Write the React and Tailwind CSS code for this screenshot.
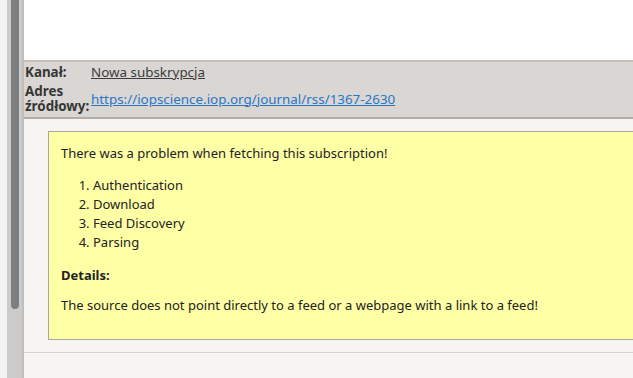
export default function App() {
  const font = { fontFamily: '"Noto Sans", "Open Sans", sans-serif' };
  return (
    <div className="flex h-[378px] w-[633px] overflow-hidden bg-[#f6f5f4] text-[13px] text-[#2e3436]" style={font}>
      <div className="w-[7px] shrink-0 bg-[#f3f3f3]" />
      <div className="relative w-[15px] shrink-0 bg-[#cbcbcb]">
        <div className="absolute left-[4px] top-0 h-[309px] w-[8px] rounded-b-[4px] bg-[#7b7f81]" />
      </div>
      <div className="flex min-w-0 flex-1 flex-col border-l-2 border-[#c3beba]">
        <div className="h-[60px] shrink-0 bg-white" />
        <div className="h-[59px] shrink-0 border-y-2 border-t-[#c5beb9] border-b-[#b3aca7] bg-[#dad6d3] pl-[1px] text-[13.4px]">
          <table className="border-collapse leading-[15px]">
            <tbody>
              <tr>
                <td className="h-[22px] w-[66px] pb-[1px] align-middle font-bold text-[#363636]">Kanał:</td>
                <td className="pb-[1px] align-middle">
                  <span className="text-[#3b3b3b] underline">Nowa subskrypcja</span>
                </td>
              </tr>
              <tr>
                <td className="align-top font-bold text-[#363636]">
                  <div>Adres</div>
                  <div>źródłowy:</div>
                </td>
                <td className="align-middle">
                  <span className="text-[#2a76c6] underline">https://iopscience.iop.org/journal/rss/1367-2630</span>
                </td>
              </tr>
            </tbody>
          </table>
        </div>
        <div className="flex-1 bg-[#f6f5f4] pt-[12px]">
          <div className="ml-[24px] h-[209px] border border-r-0 border-[#aaa89e] bg-[#ffffa6] px-[12px] pt-[12px] leading-[19px] text-[#222]">
            <p>There was a problem when fetching this subscription!</p>
            <ol className="mt-[13px] list-decimal pl-[32px]">
              <li>Authentication</li>
              <li>Download</li>
              <li>Feed Discovery</li>
              <li>Parsing</li>
            </ol>
            <p className="mt-[14px] font-bold">Details:</p>
            <p className="mt-[11px]">The source does not point directly to a feed or a webpage with a link to a feed!</p>
          </div>
          <div className="mt-[12px] h-px bg-[#d6d4d2]" />
        </div>
      </div>
    </div>
  );
}
